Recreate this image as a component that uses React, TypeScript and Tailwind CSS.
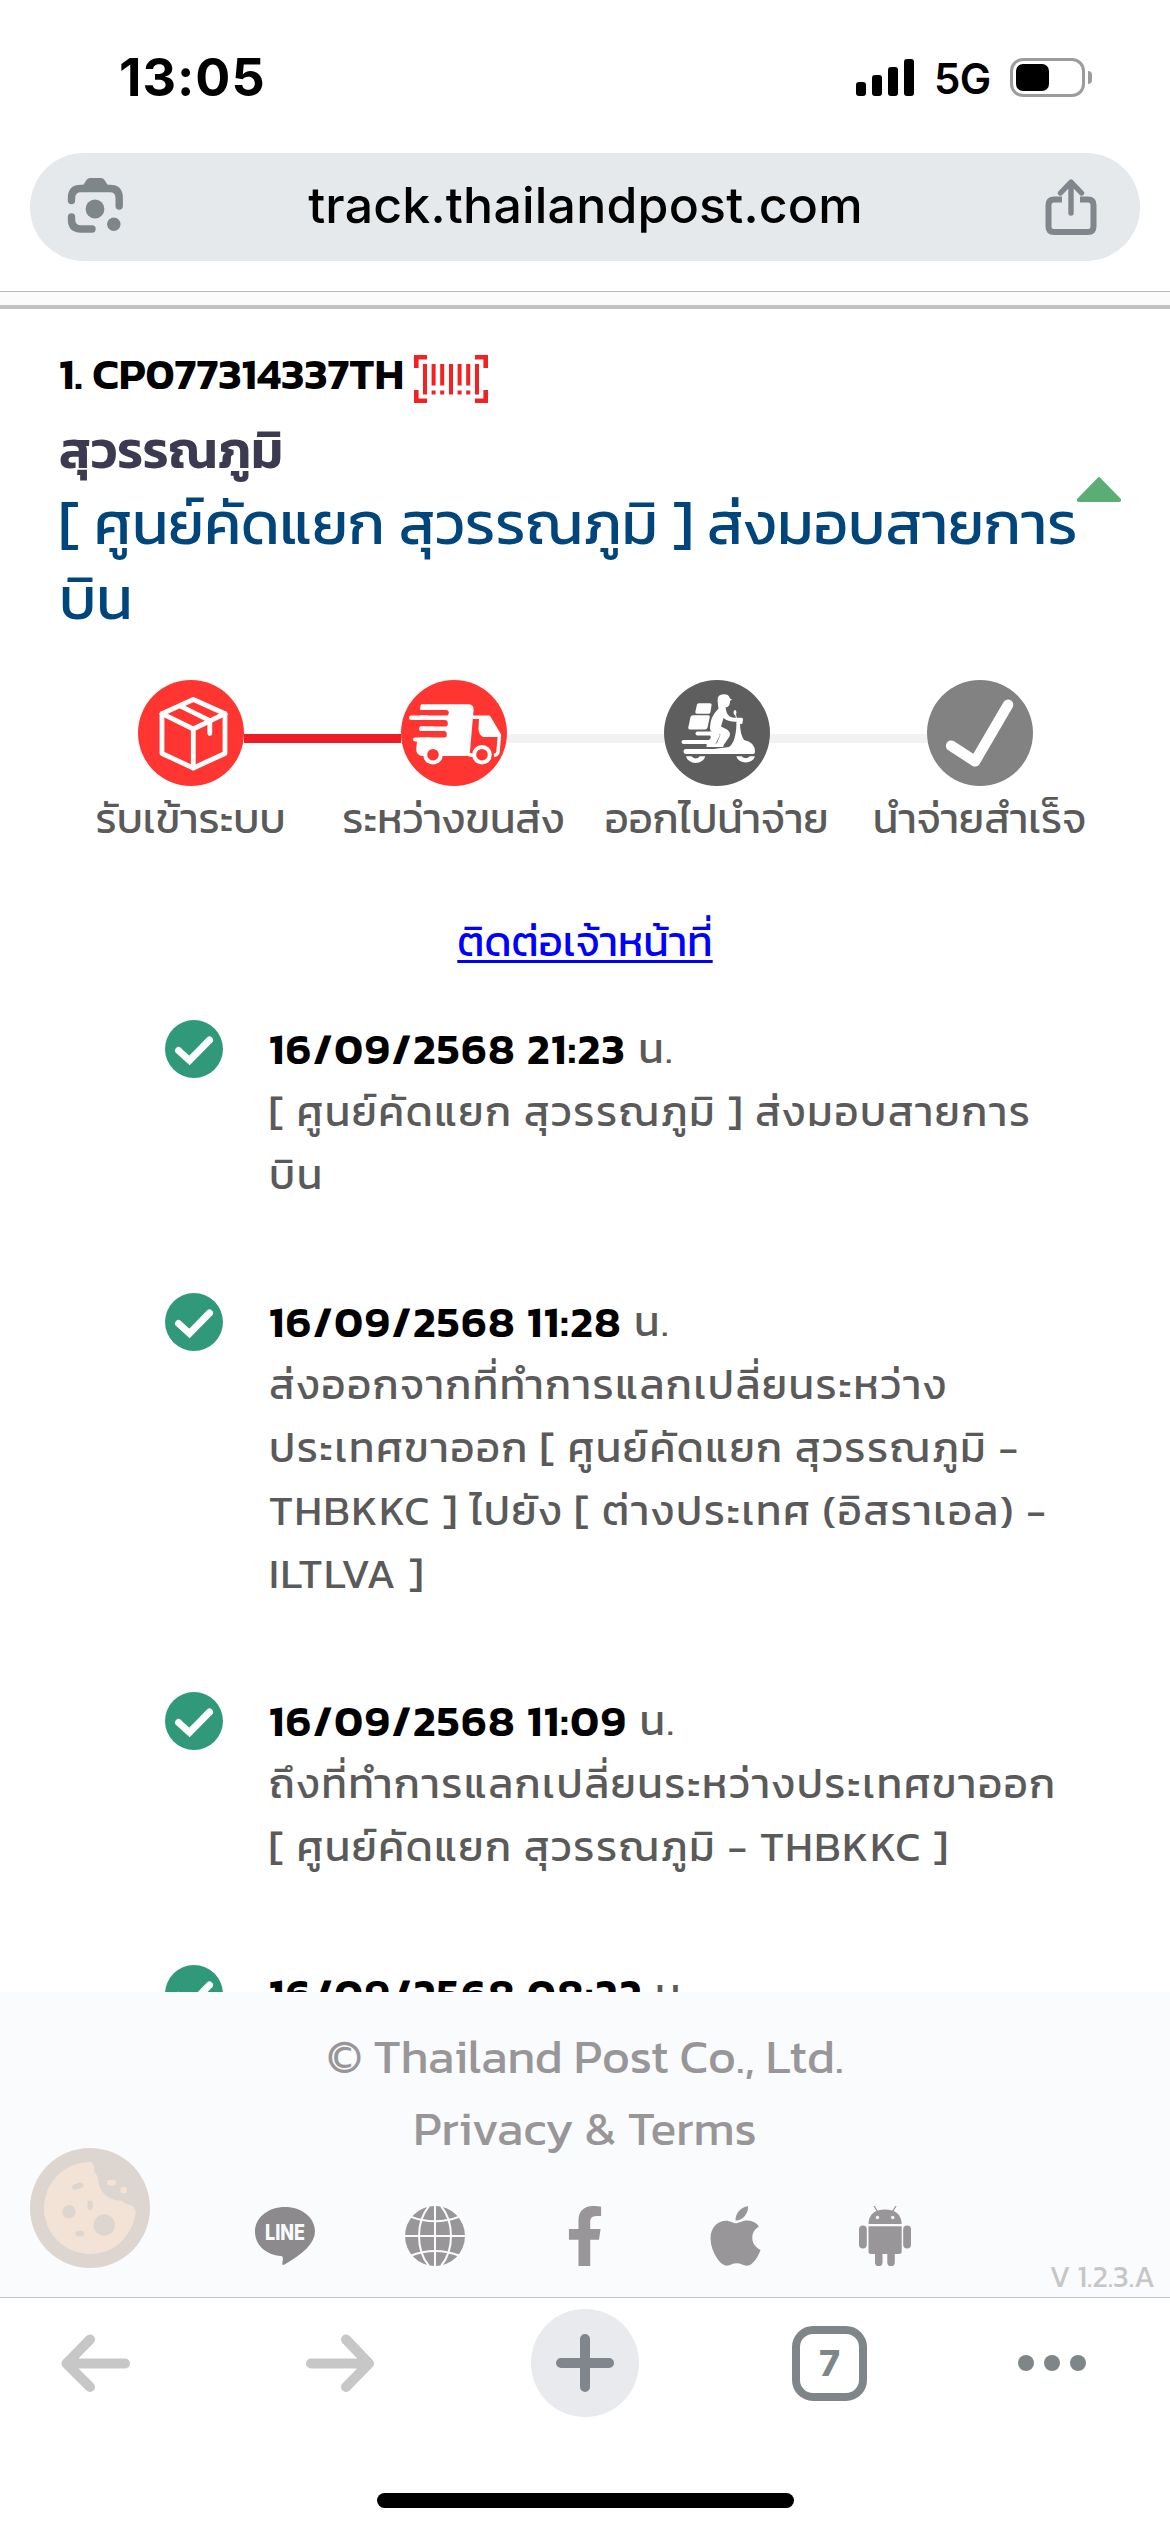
import React from "react";
import { FaApple, FaFacebookF } from "react-icons/fa";

type TrackEvent = { date: string; lines: string[] };

const events: TrackEvent[] = [
  { date: "16/09/2568 21:23", lines: ["[ ศูนย์คัดแยก สุวรรณภูมิ ] ส่งมอบสายการ", "บิน"] },
  {
    date: "16/09/2568 11:28",
    lines: [
      "ส่งออกจากที่ทำการแลกเปลี่ยนระหว่าง",
      "ประเทศขาออก [ ศูนย์คัดแยก สุวรรณภูมิ -",
      "THBKKC ] ไปยัง [ ต่างประเทศ (อิสราเอล) -",
      "ILTLVA ]",
    ],
  },
  {
    date: "16/09/2568 11:09",
    lines: ["ถึงที่ทำการแลกเปลี่ยนระหว่างประเทศขาออก", "[ ศูนย์คัดแยก สุวรรณภูมิ - THBKKC ]"],
  },
  { date: "16/09/2568 08:22", lines: [] },
];

const BoxIcon = () => (
  <svg viewBox="0 0 106 106" className="size-[106px]">
    <circle cx="53" cy="53" r="53" fill="#ff3531" />
    <g fill="none" stroke="#fff" strokeWidth="4.8" strokeLinejoin="round" strokeLinecap="round">
      <path d="M55.3 19.5 24 33.7V73.5L55.3 88 87 73.5V33.7Z" />
      <path d="M24 33.7 55.3 49 87 33.7M55.3 49V88" />
      <path d="M43 26.3 71.8 40.7V53.5" />
    </g>
  </svg>
);

const TruckIcon = () => (
  <svg viewBox="0 0 106 106" className="size-[106px]">
    <circle cx="53" cy="53" r="53" fill="#ff3531" />
    <path d="M21 24.3H67Q73 24.3 72.6 30L69 71.5Q68.5 76 64 76H22Q15 75.5 15.3 69L16 61H19V29Q19 24.3 21 24.3Z" fill="#fff" />
    <g fill="#ff3531">
      <rect x="10" y="30" width="37.8" height="5.6" rx="2.8" />
      <rect x="10" y="40" width="36.8" height="6.6" rx="3.2" />
      <rect x="10" y="51" width="35.8" height="6.6" rx="3.2" />
    </g>
    <g fill="#fff">
      <rect x="8" y="35.6" width="20" height="4.4" rx="2.2" />
      <rect x="18" y="46.6" width="16" height="4.4" rx="2.2" />
      <rect x="12" y="57.4" width="20" height="4.2" rx="2.1" />
    </g>
    <path d="M72 37.3H88L98.5 55 97 72Q96.5 75 93 75.5M66 74 74 76" fill="none" stroke="#fff" strokeWidth="3.4" strokeLinejoin="round" />
    <path d="M78 38H89L99 57H82Q77.5 54 77.5 49Z" fill="#fff" />
    <circle cx="32" cy="74.7" r="7.8" fill="#ff3531" stroke="#fff" strokeWidth="4" />
    <circle cx="81" cy="74.7" r="7.8" fill="#ff3531" stroke="#fff" strokeWidth="4" />
  </svg>
);

const ScooterIcon = () => (
  <svg viewBox="0 0 106 106" className="size-[106px]">
    <circle cx="53" cy="53" r="53" fill="#5e5e5e" />
    <g fill="#fff">
      <path d="M35 23.2H46Q47.8 23.2 47.6 25L46.4 32.2Q46 33.8 44.4 33.8H33Q31 33.8 31.3 32L33 24.6Q33.4 23.2 35 23.2Z" />
      <path d="M29 35.2H44.5Q46 35.2 45.8 37L43.5 47.5Q43 49.4 41 49.4H26Q24 49.4 24.3 47.4L26.5 37Q27 35.2 29 35.2Z" />
      <rect x="31.5" y="51.4" width="17" height="4" rx="2" />
      <rect x="17.5" y="60" width="32" height="4" rx="2" />
      <path d="M21.5 69H50L65 67Q72 62 72.5 43H76Q76 54 80 60Q91 62 91 72Q91 74 89 74H22.5Q19.5 74 19.5 71.5Q19.5 69 21.5 69Z" />
      <path d="M46 51.4H52L56 55 50 67H42Q43.5 66 42.5 64.5L45 60Q48 57.5 46 55.5Z" />
      {/* rider */}
      <path d="M53.6 20Q53.5 14.3 59.5 14.2Q65 14 66 18.5L68 19.6 66 21Q66 27 61.5 27.5L62.5 32Q64 37 70 37.8H77.5Q79 37.8 79 39.5L78.5 43Q78.3 44.2 77 44H72.5V41.8Q64 42 59.5 38L57 46.5 63 49.5Q67 52 65.5 56.5L60 64.5 59 67H49.5Q50 64.5 53 63L56.5 54.5 49 52.5Q45.5 50.5 46 47.5Q46 37 54.5 28.5Q53.8 24 53.6 20Z" />
      <path d="M22 76.2H27.5Q31.7 81 36 76.2H41.3A9.8 8.2 0 0 1 22 76.2ZM72.3 76.2H77.5Q81.7 80.5 86 76.2H91A9.6 8 0 0 1 72.3 76.2Z" />
      <ellipse cx="71" cy="32.5" rx="1.4" ry="2.6" />
    </g>
    <path d="M71.5 34 72.5 39" stroke="#fff" strokeWidth="1" />
  </svg>
);

const DoneIcon = () => (
  <svg viewBox="0 0 106 106" className="size-[106px]">
    <circle cx="53" cy="53" r="53" fill="#828282" />
    <path d="M24.2 65.8 48 81.3 81 24.8" fill="none" stroke="#fff" strokeWidth="10.6" strokeLinecap="round" strokeLinejoin="round" />
  </svg>
);

const steps = [
  { label: "รับเข้าระบบ", Icon: BoxIcon, left: "bg-transparent", right: "bg-[#ee1c25]" },
  { label: "ระหว่างขนส่ง", Icon: TruckIcon, left: "bg-[#ee1c25]", right: "bg-[#f2f2f2]" },
  { label: "ออกไปนำจ่าย", Icon: ScooterIcon, left: "bg-[#f2f2f2]", right: "bg-[#f2f2f2]" },
  { label: "นำจ่ายสำเร็จ", Icon: DoneIcon, left: "bg-[#f2f2f2]", right: "bg-transparent" },
];

const StatusBar = () => (
  <div className="flex h-[153px] shrink-0 items-start pt-[58px] pl-[119px] font-['Inter',sans-serif]">
    <div className="w-[737px] text-[52px] leading-[40px] font-bold tracking-[1px]">13:05</div>
    <svg width="58" height="39" viewBox="0 0 58 39">
      <rect x="0" y="24" width="10" height="14" rx="3" />
      <rect x="16" y="17" width="10" height="21" rx="3" />
      <rect x="32" y="9" width="10" height="29" rx="3" />
      <rect x="48" y="1" width="10" height="37" rx="3" />
    </svg>
    <div className="ml-[20px] w-[76px] text-[42px] leading-[42px] font-semibold -tracking-[0.6px]">5G</div>
    <div className="flex h-[39px] w-[75px] items-center rounded-[13px] border-3 border-[#9c9c9c] pl-[3px]">
      <div className="h-[27px] w-[33px] rounded-[7px] bg-black" />
    </div>
    <div className="mt-[13px] ml-[3px] h-[13px] w-[4px] rounded-r-full bg-[#9c9c9c]" />
  </div>
);

const AddressBar = () => (
  <div className="mx-[30px] flex h-[108px] shrink-0 items-center justify-between rounded-full bg-[#e5e9ec] pr-[43px] pl-[37px]">
    <svg width="56" height="56" viewBox="0 0 56 56" className="mb-[2px]">
      <g fill="none" stroke="#7f8689" strokeWidth="7.4" strokeLinecap="round">
        <path d="M4.5 22.5V20Q4.5 10.5 14 10.5H43Q52.2 10.5 52.2 20V28" />
        <path d="M4.5 39V41.5Q4.5 51 14 51H25" />
      </g>
      <path d="M15 9 19.5 2Q21 0 23 0H34Q36 0 37.5 2L42 9Z" fill="#7f8689" />
      <circle cx="28" cy="31" r="9.4" fill="#7f8689" />
      <circle cx="46.8" cy="46.3" r="6.7" fill="#7f8689" />
    </svg>
    <div className="mb-[5px] ml-[3px] font-['Inter',sans-serif] text-[50px] leading-[60px] font-medium tracking-[0.2px] whitespace-nowrap">
      track.thailandpost.com
    </div>
    <svg width="52" height="56" viewBox="0 0 52 56" fill="none" stroke="#80868b" strokeWidth="6">
      <path d="M17 20.5H9Q3.5 20.5 3.5 26V47.5Q3.5 53 9 53H43Q48.5 53 48.5 47.5V26Q48.5 20.5 43 20.5H35" />
      <path d="M26 4V34M15.5 14 26 3 36.5 14" strokeWidth="5.4" strokeLinecap="round" strokeLinejoin="round" />
    </svg>
  </div>
);

const Barcode = () => (
  <svg width="74" height="48" viewBox="0 0 74 48" fill="#f32222">
    <path d="M0 0H13V4.6H4.6V13H0ZM61 0H74V13H69.4V4.6H61ZM0 35H4.6V43.4H13V48H0ZM69.4 35H74V48H61V43.4H69.4Z" />
    <path d="M9 9H13V39.5H9ZM35 9H39V39.5H35ZM61 9H65V39.5H61Z" />
    <path d="M17.6 9H21.6V30.5H17.6ZM26.2 9H30.2V30.5H26.2ZM43.6 9H47.6V30.5H43.6ZM52.2 9H56.2V30.5H52.2Z" />
    <path d="M17.6 35.5H21.6V39.5H17.6ZM26.2 35.5H30.2V39.5H26.2ZM43.6 35.5H47.6V39.5H43.6ZM52.2 35.5H56.2V39.5H52.2Z" />
  </svg>
);

const ParcelHeader = () => (
  <div className="relative pt-[35px] pl-[59px]">
    <div className="flex h-[59px] items-end gap-[10px]">
      <h1 className="text-[44px] leading-[59px] font-semibold whitespace-nowrap text-black">1. CP077314337TH</h1>
      <Barcode />
    </div>
    <h2 className="mt-[11px] text-[51px] leading-[72px] font-semibold text-[#3c3a50]">สุวรรณภูมิ</h2>
    <p className="text-[60px] leading-[75px] whitespace-nowrap text-[#00457c]">
      [ ศูนย์คัดแยก สุวรรณภูมิ ] ส่งมอบสายการ
      <br />
      บิน
    </p>
    <svg width="46" height="27" viewBox="0 0 46 27" className="absolute top-[167px] left-[1076px]">
      <path d="M23 2 44 23.5Q44.5 25 43 25H3Q1.5 25 2 23.5Z" fill="#5aad74" stroke="#5aad74" strokeWidth="2" strokeLinejoin="round" />
    </svg>
  </div>
);

const Steps = () => (
  <div className="mt-[44px] grid grid-cols-4 px-[59px]">
    {steps.map(({ label, Icon, left, right }) => (
      <div key={label}>
        <div className="flex items-center">
          <div className={`mt-[11px] h-[9px] flex-1 ${left}`} />
          <Icon />
          <div className={`mt-[11px] h-[9px] flex-1 ${right}`} />
        </div>
        <div className="mt-px text-center text-[42px] leading-[63px] whitespace-nowrap text-[#5a5a5a]">{label}</div>
      </div>
    ))}
  </div>
);

const Timeline = () => (
  <ul className="mt-[44px] flex flex-col gap-[84px]">
    {events.map((ev) => (
      <li key={ev.date} className="flex items-start pl-[165px]">
        <svg width="58" height="58" viewBox="0 0 58 58" className="mt-[3px] mr-[46px] shrink-0">
          <circle cx="29" cy="29" r="29" fill="#2f997a" />
          <path d="M13.5 30.5 24.5 40.5 44.5 20" fill="none" stroke="#fff" strokeWidth="7" strokeLinecap="round" strokeLinejoin="miter" />
        </svg>
        <div className="text-[42px] leading-[63px] tracking-[1.55px] whitespace-nowrap text-[#5a5a5a]">
          <div className="flex h-[63px] gap-[12px]">
            <b className="text-[43.5px] font-semibold text-black">{ev.date}</b>
            <span>น.</span>
          </div>
          {ev.lines.map((line) => (
            <div key={line}>{line}</div>
          ))}
        </div>
      </li>
    ))}
  </ul>
);

const LineIcon = () => (
  <svg width="60" height="60" viewBox="0 0 60 60">
    <path
      d="M30 1C46.5 1 60 11.5 60 25.5C60 37 48 48 29.5 58.5C27.5 59.5 27 59 27.5 56C28 53 28.5 50.5 26 50C11 49 0 39 0 25.5C0 11.5 13.5 1 30 1Z"
      fill="#8d8a8d"
    />
    <text x="10" y="34" textLength="40" lengthAdjust="spacingAndGlyphs" fontFamily="Inter, sans-serif" fontSize="21" fontWeight="800" fill="#fafbfd">
      LINE
    </text>
  </svg>
);

const GlobeIcon = () => (
  <svg width="60" height="60" viewBox="0 0 60 60">
    <circle cx="30" cy="30" r="30" fill="#999699" />
    <g fill="none" stroke="#fafbfd" strokeWidth="2">
      <path d="M30 0V60M0 30H60" />
      <path d="M24 0Q14 12 14 30T24 60M36 0Q46 12 46 30T36 60" />
      <path d="M5 10.5Q30 20 55 10.5M5 50Q30 40 55 50" />
    </g>
  </svg>
);

const AndroidIcon = () => (
  <svg width="52" height="60" viewBox="0 0 52 60" fill="#999699">
    <path d="M9.5 18Q10 3.5 26 3.5T42.7 18Z" />
    <path d="M15 0 18.5 5.5M37 0 33.5 5.5" stroke="#999699" strokeWidth="1.3" />
    <path d="M9.5 20.2H42.7V45.5Q42.7 48 40 48H12Q9.5 48 9.5 45.5Z" />
    <rect x="0" y="19.5" width="7.8" height="23" rx="3.9" />
    <rect x="44.2" y="19.5" width="7.8" height="23" rx="3.9" />
    <rect x="16" y="40" width="7.5" height="20" rx="3.6" />
    <rect x="28.3" y="40" width="7.5" height="20" rx="3.6" />
    <circle cx="18.5" cy="11.5" r="1.7" fill="#fafbfd" />
    <circle cx="33.7" cy="11.5" r="1.7" fill="#fafbfd" />
  </svg>
);

const Cookie = () => (
  <svg width="120" height="120" viewBox="0 0 120 120" className="absolute top-[156px] left-[30px]">
    <circle cx="60" cy="60" r="60" fill="#ddd6d0" />
    <path
      d="M60 14C63 14 64 17 64 21C64 26 68 26.5 68 31C68.5 43 78 52.5 90 52.5C94 53 95 56.5 100 57C104 58 106 61 105.5 66A46 46 0 1 1 60 14Z"
      fill="#f3e3d6"
    />
    <g fill="#ddd6d0">
      <circle cx="39" cy="63.7" r="6.7" />
      <circle cx="74.3" cy="77" r="10.7" />
      <rect x="42" y="35.5" width="11.5" height="5.4" rx="2.7" transform="rotate(-18 47.5 38)" />
      <rect x="57.5" y="52.5" width="5.2" height="9.5" rx="2.6" />
      <rect x="45.5" y="83" width="8.7" height="5.6" rx="2.8" />
    </g>
    <rect x="77" y="32" width="9" height="5.4" rx="2.7" fill="#f3e3d6" />
    <circle cx="93.6" cy="42" r="3.3" fill="#f3e3d6" />
  </svg>
);

const Footer = () => (
  <footer className="relative h-[306px] shrink-0 border-b border-[#c2c4c7] bg-[#fafbfd] pt-[28px] text-center text-[48px] leading-[72px] text-[#999699]">
    <div>© Thailand Post Co., Ltd.</div>
    <div>Privacy &amp; Terms</div>
    <div className="mt-[42px] grid grid-cols-[repeat(5,150px)] justify-center justify-items-center">
      <LineIcon />
      <GlobeIcon />
      <FaFacebookF className="h-[60px] w-[38px]" />
      <FaApple className="-mt-[4px] h-[68px] w-[51px]" />
      <AndroidIcon />
    </div>
    <Cookie />
    <div className="absolute right-[15px] bottom-[-1px] text-[30px] leading-[42px] text-[#c6c6c8]">V 1.2.3.A</div>
  </footer>
);

const Toolbar = () => (
  <div className="shrink-0 pt-[11px]">
    <div className="flex h-[108px] items-center pl-[61px]">
      <svg width="70" height="58" viewBox="0 0 70 58" fill="none" stroke="#c7c7c7" strokeWidth="10" strokeLinecap="round" strokeLinejoin="round">
        <path d="M64 29.5H8M29 5.5 5.5 29.5 29 53" />
      </svg>
      <svg width="70" height="58" viewBox="0 0 70 58" fill="none" stroke="#c7c7c7" strokeWidth="10" strokeLinecap="round" strokeLinejoin="round" className="ml-[174px]">
        <path d="M6 29.5H62M41 5.5 64 29.5 41 53" />
      </svg>
      <div className="ml-[156px] flex size-[108px] items-center justify-center rounded-full bg-[#e8eaee]">
        <svg width="58" height="58" viewBox="0 0 58 58" stroke="#80868c" strokeWidth="10" strokeLinecap="round">
          <path d="M29 5V53M5 29H53" />
        </svg>
      </div>
      <div className="ml-[153px] flex size-[75px] items-center justify-center rounded-[21px] border-8 border-[#7f8689] font-['Inter',sans-serif] text-[36px] font-extrabold text-[#7f8689]">
        7
      </div>
      <div className="ml-[151px] flex gap-[10px]">
        <div className="size-[16px] rounded-full bg-[#7f8689]" />
        <div className="size-[16px] rounded-full bg-[#7f8689]" />
        <div className="size-[16px] rounded-full bg-[#7f8689]" />
      </div>
    </div>
    <div className="mx-auto mt-[76px] h-[15px] w-[417px] rounded-full bg-black" />
  </div>
);

export default function App() {
  return (
    <div className="flex h-[2532px] w-[1170px] flex-col overflow-hidden bg-white font-['Kanit','Noto_Sans_Thai','Noto_Sans',sans-serif] text-black">
      <StatusBar />
      <AddressBar />
      <div className="mt-[30px] h-[14px] shrink-0 border-t border-[#bcbcbc] bg-[#fbfbfb]" />
      <main className="h-[1687px] shrink-0 overflow-hidden border-t-4 border-[#c2c2c2]">
        <ParcelHeader />
        <Steps />
        <div className="mt-[60px] text-center text-[42px] leading-[63px]">
          <a className="text-[#0000ff] underline decoration-[3px] underline-offset-[4px] [text-decoration-skip-ink:none]">ติดต่อเจ้าหน้าที่</a>
        </div>
        <Timeline />
      </main>
      <Footer />
      <Toolbar />
    </div>
  );
}
